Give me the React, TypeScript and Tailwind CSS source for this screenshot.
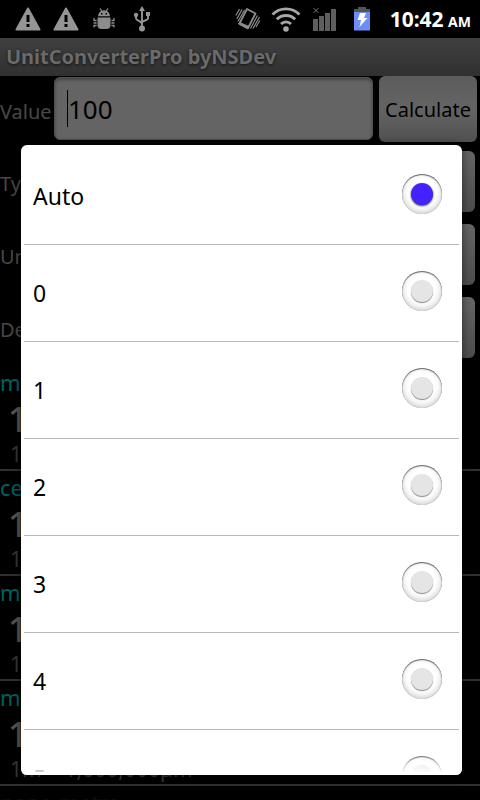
import React, { useState } from 'react';

interface Conversion {
  name: string;
  value: string;
  formula: string;
}

const conversions: Conversion[] = [
  { name: 'metre', value: '100 m', formula: '1m = 1m' },
  { name: 'centi metre', value: '10,000 cm', formula: '1m = 100cm' },
  { name: 'milli metre', value: '100,000 mm', formula: '1m = 1,000mm' },
  { name: 'micro metre', value: '100,000,000 µm', formula: '1m = 1,000,000µm' },
  { name: 'nano metre', value: '100,000,000,000 nm', formula: '1m = 1,000,000,000nm' },
];

const decimalOptions = ['Auto', '0', '1', '2', '3', '4', '5'];

const WarningIcon = () => (
  <svg width="26" height="24" viewBox="0 0 26 24" aria-hidden="true">
    <path d="M13 1.5 24.5 22.5h-23Z" fill="#959595" stroke="#959595" strokeWidth="2" strokeLinejoin="round" />
    <path d="M11.500 8h3v7h-3zM11.500 17h3v3h-3z" fill="#000" />
  </svg>
);

const BugIcon = () => (
  <svg width="22" height="22" viewBox="0 0 22 22" fill="#8c8c8c" aria-hidden="true">
    <path d="M5 8.200a6 6 0 0 1 12 0Z" />
    <path d="M4.500 9.500h13v7.500a4 4 0 0 1-4 4h-5a4 4 0 0 1-4-4Z" />
    <path d="m7 .5 2 3M15 .5l-2 3M3.600 12.500H1v-2.500M3.600 15H.5M3.600 17.500H1v2M18.400 12.500H21v-2.500M18.400 15h3.100M18.400 17.500H21v2" fill="none" stroke="#8c8c8c" strokeWidth="1.300" />
    <path d="M8 5h1.500v1.500H8zM12.500 5H14v1.500h-1.500z" fill="#000" />
  </svg>
);

const UsbIcon = () => (
  <svg width="18" height="26" viewBox="0 0 18 26" fill="#959595" aria-hidden="true">
    <path d="M9 0l3 5H6Z" />
    <circle cx="9" cy="22.500" r="3" />
    <circle cx="3" cy="9" r="2.200" />
    <path d="M13 6h4v4h-4z" />
    <path d="M9 4v17M3 10v2.500c0 2 6 3 6 5.500M15 9v3.500c0 2-6 2-6 4" fill="none" stroke="#959595" strokeWidth="1.900" />
  </svg>
);

const VibrateIcon = () => (
  <svg width="26" height="24" viewBox="0 0 26 24" fill="none" stroke="#8c8c8c" aria-hidden="true">
    <path d="M12 2 20.500 6.500 13 21 4.500 16.500Z" strokeWidth="1.800" strokeLinejoin="round" />
    <path d="m4.500 15.500 9.500 4-1 2.500-9.500-5Z" fill="#8c8c8c" />
    <path d="M4.500 2 .8 8.500M7 2.500 1.800 12M9.500 3 3 14.500M24.800 13.500 21 20M24.500 10 18 21.500M22.500 8.500 15.500 21.500" strokeWidth="1.200" />
  </svg>
);

const WifiIcon = () => (
  <svg width="30" height="25" viewBox="0 0 30 25" fill="none" stroke="#a8a8a8" strokeWidth="2.800" aria-hidden="true">
    <path d="M1.500 7.500a19 19 0 0 1 27 0" />
    <path d="M5.800 12.300a13 13 0 0 1 18.400 0" />
    <path d="M10 17a7 7 0 0 1 10 0" />
    <circle cx="15" cy="22" r="2.800" fill="#a8a8a8" stroke="none" />
  </svg>
);

const SignalIcon = () => (
  <svg width="24" height="24" viewBox="0 0 24 24" fill="#5e5e5e" aria-hidden="true">
    <path d="M0 12h5v12H0zM6 9h5v15H6zM12 6h5v18h-5zM18 2h5v22h-5z" />
    <path d="m.5 1 5 5m0-5L.5 6" fill="none" stroke="#777" />
  </svg>
);

const BatteryIcon = () => (
  <svg width="18" height="24" viewBox="0 0 18 24" aria-hidden="true">
    <path d="M5 0h8v2h4v4H1V2h4Z" fill="#555" />
    <path d="M1 5h16v18.500H1Z" fill="#6d8df8" />
    <path d="M7 6h6l-2 5h3.500L6.500 20l1.500-7H4.500Z" fill="#fff" />
  </svg>
);

const StatusBar = () => (
  <div className="flex h-[38px] items-center justify-between pl-[15px] pr-[9px]">
    <div className="flex items-center">
      <WarningIcon />
      <div className="ml-3 flex"><WarningIcon /></div>
      <div className="ml-3.5 flex"><BugIcon /></div>
      <div className="ml-[18px] flex"><UsbIcon /></div>
    </div>
    <div className="flex items-center">
      <VibrateIcon />
      <div className="ml-2.5 flex"><WifiIcon /></div>
      <div className="ml-3 flex"><SignalIcon /></div>
      <div className="ml-4 flex"><BatteryIcon /></div>
      <div className="ml-[19px] whitespace-nowrap pt-0.5 text-[21px] font-bold text-white">
        10:42 <span className="-ml-px text-sm">AM</span>
      </div>
    </div>
  </div>
);

const SelectRow: React.FC<{ id: string; label: string; value: string }> = ({ id, label, value }) => (
  <div className="flex h-[73px] items-start">
    <label htmlFor={id} className="w-24 text-xl leading-[66px]">{label}</label>
    <select
      id={id}
      className="mr-[5px] h-[61px] flex-1 appearance-none rounded-md bg-linear-to-b from-[#656565] to-[#4c4c4c] px-4 text-xl text-black"
    >
      <option>{value}</option>
    </select>
  </div>
);

const ConversionItem: React.FC<{ item: Conversion }> = ({ item }) => (
  <li className="h-[105px] shrink-0 overflow-hidden whitespace-nowrap border-b-2 border-[#303030]">
    <div className="h-8 text-[22px] leading-8 text-[#006060]">{item.name}</div>
    <div className="h-[42px] pl-2 text-[34px] leading-[42px] font-medium text-[#545454]">{item.value}</div>
    <div className="h-[29px] pl-2.5 text-[21px] leading-[29px] text-[#363636]">{item.formula}</div>
  </li>
);

interface OptionRowProps {
  label: string;
  checked: boolean;
  onSelect: () => void;
}

const OptionRow: React.FC<OptionRowProps> = ({ label, checked, onSelect }) => (
  <label className="flex h-[97px] items-center justify-between border-b border-[#b8b8b8] pl-[9px] pr-[17px] text-[23px] text-black">
    <span>{label}</span>
    <input
      type="radio"
      name="decimals"
      checked={checked}
      onChange={onSelect}
      className="mb-1 grid size-10 appearance-none place-items-center rounded-full bg-white shadow-[inset_0_1px_1px_#666,inset_0_0_1px_#999,inset_0_-2px_6px_#ccc] before:size-[22px] before:rounded-full before:bg-[#e5e5e5] before:shadow-[0_1px_1px_#888] before:content-[''] checked:before:bg-[#4422ff] checked:before:shadow-[0_1px_2px_#333]"
    />
  </label>
);

export default function App() {
  const [value, setValue] = useState('100');
  const [decimals, setDecimals] = useState('Auto');

  return (
    <div className="relative flex h-screen flex-col overflow-hidden bg-black font-['Noto_Sans',sans-serif] text-[#484848]">
      <StatusBar />
      <h1 className="h-[38px] shrink-0 bg-linear-to-b from-[#404040] to-[#303030] pl-1.5 text-xl leading-[38px] font-bold text-[#6a6a6a] [text-shadow:0_1px_3px_#111]">
        UnitConverterPro byNSDev
      </h1>

      <div className="flex h-[75px] shrink-0 items-start">
        <label htmlFor="value" className="w-[54px] pt-[22px] text-xl">Value</label>
        <div className="mt-px flex h-[63px] min-w-0 flex-1 items-center rounded-md border border-[#505050] bg-[#646464] pl-3 shadow-[inset_0_2px_3px_#444]">
          <span className="h-[37px] w-px shrink-0 bg-black" />
          <input
            id="value"
            value={value}
            onChange={(e) => setValue(e.target.value)}
            className="min-w-0 flex-1 bg-transparent pt-0.5 text-[26px] text-black outline-none"
          />
        </div>
        <button className="mr-[3px] ml-1.5 h-[66px] w-[98px] rounded-md bg-linear-to-b from-[#5c5c5c] via-[#646464] to-[#505050] pt-0.5 text-xl text-black">
          Calculate
        </button>
      </div>

      <div className="shrink-0">
        <SelectRow id="type" label="Type" value="Length" />
        <SelectRow id="unit" label="Unit" value="metre" />
        <SelectRow id="decimals" label="Decimals" value={decimals} />
      </div>

      <ul className="-mt-1 flex min-h-0 flex-1 flex-col overflow-hidden">
        {conversions.map((item) => (
          <ConversionItem key={item.name} item={item} />
        ))}
      </ul>
      <div className="absolute inset-x-0 bottom-0 h-3 bg-black/80" />

      {/* decimals picker */}
      <div className="absolute inset-0 flex pt-[145px] pr-[18px] pb-[25px] pl-[21px]">
        <div role="dialog" aria-label="Decimals" className="relative flex-1 overflow-hidden rounded-md bg-white p-[3px] shadow-[0_0_8px_#0008]">
          <div className="h-full overflow-hidden">
            {decimalOptions.map((option) => (
              <OptionRow
                key={option}
                label={option}
                checked={decimals === option}
                onSelect={() => setDecimals(option)}
              />
            ))}
          </div>
          <div className="pointer-events-none absolute inset-x-0 bottom-0 h-5 bg-linear-to-t from-white to-transparent" />
        </div>
      </div>
    </div>
  );
}
